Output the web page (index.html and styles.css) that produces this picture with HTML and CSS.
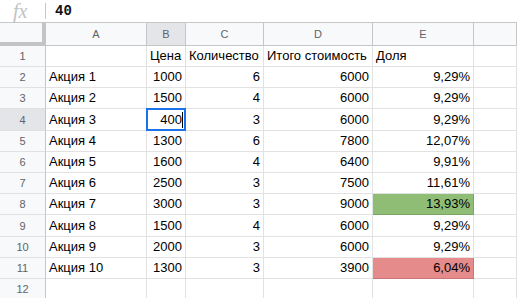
FILE: index.html
```html
<!DOCTYPE html>
<html lang="ru">
<head>
<meta charset="utf-8">
<link rel="stylesheet" href="styles.css">
</head>
<body>
<div class="fbar">
  <span class="fx">fx</span>
  <span class="fsep"></span>
  <span class="fval">40</span>
</div>
<div class="grid">
  <div class="corner"></div>
  <div class="ch">A</div><div class="ch sel">B</div><div class="ch">C</div><div class="ch">D</div><div class="ch">E</div><div class="ch"></div>

  <div class="rh">1</div><div class="c"></div><div class="c">Цена</div><div class="c">Количество</div><div class="c">Итого стоимость</div><div class="c">Доля</div><div class="c"></div>
  <div class="rh">2</div><div class="c">Акция 1</div><div class="c n">1000</div><div class="c n">6</div><div class="c n">6000</div><div class="c n">9,29%</div><div class="c"></div>
  <div class="rh">3</div><div class="c">Акция 2</div><div class="c n">1500</div><div class="c n">4</div><div class="c n">6000</div><div class="c n">9,29%</div><div class="c"></div>
  <div class="rh sel">4</div><div class="c">Акция 3</div><div class="c n active"><span class="caret">400</span></div><div class="c n">3</div><div class="c n">6000</div><div class="c n">9,29%</div><div class="c"></div>
  <div class="rh">5</div><div class="c">Акция 4</div><div class="c n">1300</div><div class="c n">6</div><div class="c n">7800</div><div class="c n">12,07%</div><div class="c"></div>
  <div class="rh">6</div><div class="c">Акция 5</div><div class="c n">1600</div><div class="c n">4</div><div class="c n">6400</div><div class="c n">9,91%</div><div class="c"></div>
  <div class="rh">7</div><div class="c">Акция 6</div><div class="c n">2500</div><div class="c n">3</div><div class="c n">7500</div><div class="c n">11,61%</div><div class="c"></div>
  <div class="rh">8</div><div class="c">Акция 7</div><div class="c n">3000</div><div class="c n">3</div><div class="c n">9000</div><div class="c n hi">13,93%</div><div class="c"></div>
  <div class="rh">9</div><div class="c">Акция 8</div><div class="c n">1500</div><div class="c n">4</div><div class="c n">6000</div><div class="c n">9,29%</div><div class="c"></div>
  <div class="rh">10</div><div class="c">Акция 9</div><div class="c n">2000</div><div class="c n">3</div><div class="c n">6000</div><div class="c n">9,29%</div><div class="c"></div>
  <div class="rh">11</div><div class="c">Акция 10</div><div class="c n">1300</div><div class="c n">3</div><div class="c n">3900</div><div class="c n lo">6,04%</div><div class="c"></div>
  <div class="rh">12</div><div class="c"></div><div class="c"></div><div class="c"></div><div class="c"></div><div class="c"></div><div class="c"></div>
</div>
</body>
</html>
```
FILE: styles.css
```css
* { box-sizing: border-box; }
html, body {
  margin: 0;
  padding: 0;
  background: #fff;
  overflow: hidden;
  font-family: "Liberation Sans", Arial, sans-serif;
}
.fbar {
  height: 23px;
  border-bottom: 1px solid #c7c7c7;
  display: flex;
  align-items: center;
}
.fx {
  width: 45px;
  padding-left: 13px;
  font-family: "Liberation Serif", serif;
  font-style: italic;
  font-size: 20px;
  color: #c2c2c2;
  line-height: 22px;
}
.fsep {
  width: 1px;
  height: 16px;
  background: #c7c7c7;
}
.fval {
  padding-left: 9px;
  font-family: "Liberation Mono", monospace;
  font-size: 14px;
  font-weight: 600;
  color: #111;
}
.grid {
  display: grid;
  grid-template-columns: 46px 101px 39px 78px 109px 101px 1fr;
  grid-template-rows: 23px 21px 21px 21px 22px 21px 21px 21px 21px 22px 21px 21px 21px;
}
.corner {
  background: #f8f9fa;
  border-right: 4px solid #c4c4c4;
  border-bottom: 4px solid #c4c4c4;
}
.ch {
  background: #f8f9fa;
  border-right: 1px solid #c4c7c5;
  border-bottom: 1px solid #c4c7c5;
  color: #5f6368;
  font-size: 11px;
  display: flex;
  align-items: center;
  justify-content: center;
}
.rh {
  background: #f8f9fa;
  border-right: 1px solid #c4c7c5;
  border-bottom: 1px solid #e1e1e1;
  color: #5f6368;
  font-size: 11px;
  display: flex;
  align-items: center;
  justify-content: center;
}
.sel { background: #e3e5e8; }
.c {
  border-right: 1px solid #e2e2e2;
  border-bottom: 1px solid #e2e2e2;
  font-size: 13px;
  color: #000;
  white-space: nowrap;
  overflow: hidden;
  display: flex;
  align-items: flex-end;
  padding: 0 3px 2px 3px;
  line-height: 16px;
}
.n { justify-content: flex-end; }
.hi { background: #8fbd76; border-right-color: #7aa862; border-bottom-color: #7aa862; }
.lo { background: #e58b8b; border-right-color: #c97575; border-bottom-color: #c97575; }
.active { position: relative; overflow: visible; }
.active::after {
  content: "";
  position: absolute;
  left: -1px;
  top: -1px;
  right: -1px;
  bottom: -1px;
  border: 2px solid #1a73e8;
}
.caret {
  border-right: 1px solid #000;
  margin-right: -1px;
}
```
